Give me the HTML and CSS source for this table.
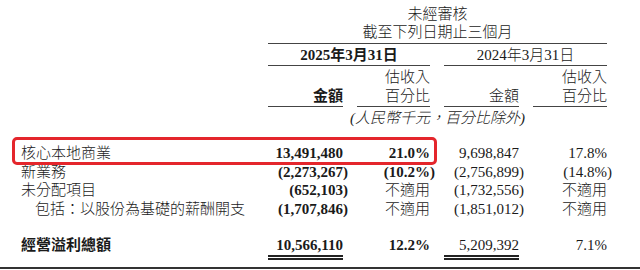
FILE: index.html
```html
<!DOCTYPE html>
<html lang="zh-Hant">
<head>
    <meta charset="UTF-8">
    <title>經營溢利</title>
    <link rel="stylesheet" href="styles.css">
</head>
<body>
    <div class="sheet">
        <div class="cols">
            <div class="title">未經審核<br>截至下列日期止三個月</div>
        </div>
        <div class="cols">
            <div class="date date-now">2025年3月31日</div>
            <div class="date date-prev">2024年3月31日</div>
        </div>
        <div class="cols">
            <div class="colhead c1 bold">金額</div>
            <div class="colhead c2">估收入<br>百分比</div>
            <div class="colhead c3">金額</div>
            <div class="colhead c4">估收入<br>百分比</div>
        </div>
        <div class="cols">
            <div class="note">(人民幣千元，百分比除外)</div>
        </div>

        <div class="rows">
            <div class="cols line">
                <div class="label">核心本地商業</div>
                <div class="num bold">13,491,480</div>
                <div class="num bold">21.0%</div>
                <div class="num">9,698,847</div>
                <div class="num">17.8%</div>
            </div>
            <div class="cols line">
                <div class="label">新業務</div>
                <div class="num bold">(2,273,267<span class="hang">)</span></div>
                <div class="num bold">(10.2%<span class="hang">)</span></div>
                <div class="num">(2,756,899<span class="hang">)</span></div>
                <div class="num">(14.8%<span class="hang">)</span></div>
            </div>
            <div class="cols line">
                <div class="label">未分配項目</div>
                <div class="num bold">(652,103<span class="hang">)</span></div>
                <div class="num">不適用</div>
                <div class="num">(1,732,556<span class="hang">)</span></div>
                <div class="num">不適用</div>
            </div>
            <div class="cols line">
                <div class="label sub">包括：以股份為基礎的薪酬開支</div>
                <div class="num bold">(1,707,846<span class="hang">)</span></div>
                <div class="num">不適用</div>
                <div class="num">(1,851,012<span class="hang">)</span></div>
                <div class="num">不適用</div>
            </div>
            <div class="cols line total">
                <div class="label bold">經營溢利總額</div>
                <div class="num bold double">10,566,110</div>
                <div class="num bold">12.2%</div>
                <div class="num double">5,209,392</div>
                <div class="num">7.1%</div>
            </div>
        </div>

        <div class="bottom-rule"></div>
        <div class="highlight"></div>
    </div>
</body>
</html>
```

FILE: styles.css
```css
body {
    margin: 0;
    background: #fff;
}
.sheet {
    position: relative;
    width: 640px;
    height: 270px;
    overflow: hidden;
    font-family: "Liberation Serif", "Noto Sans CJK TC", serif;
    font-size: 15px;
    font-weight: 300;
    color: #1a1a1a;
}
.cols {
    display: grid;
    grid-template-columns: 254px 75px 73px 75px 74px;
    column-gap: 14px;
}
.bold {
    font-weight: bold;
}
.title {
    grid-column: 2 / 6;
    text-align: center;
    line-height: 18px;
    padding-top: 5px;
    padding-bottom: 2px;
    border-bottom: 1px solid #444;
}
.date {
    text-align: center;
    line-height: 18px;
    padding-top: 2px;
    padding-bottom: 1px;
    border-bottom: 1px solid #444;
}
.date-now {
    grid-column: 2 / 4;
    font-weight: bold;
}
.date-prev {
    grid-column: 4 / 6;
}
.colhead {
    display: flex;
    align-items: flex-end;
    justify-content: flex-end;
    text-align: right;
    line-height: 19px;
    padding-top: 2px;
    border-bottom: 1px solid #444;
}
.c1 { grid-column: 2; }
.c2 { grid-column: 3; }
.c3 { grid-column: 4; }
.c4 { grid-column: 5; }
.note {
    grid-column: 2 / 6;
    text-align: center;
    font-style: italic;
    line-height: 18px;
    padding-top: 2px;
}
.rows {
    padding-top: 17px;
}
.line {
    line-height: 18.7px;
}
.label {
    padding-left: 21px;
    white-space: nowrap;
}
.label.sub {
    padding-left: 35px;
}
.num {
    text-align: right;
    white-space: nowrap;
}
.hang {
    margin-right: -5px;
}
.total {
    margin-top: 17px;
}
.double {
    border-bottom: 5px double #222;
}
.bottom-rule {
    margin-top: 7px;
    border-top: 2px solid #333;
}
.highlight {
    position: absolute;
    left: 12px;
    top: 137px;
    width: 425px;
    height: 28px;
    box-sizing: border-box;
    border: 3px solid #e4262c;
    border-radius: 5px;
}
```
